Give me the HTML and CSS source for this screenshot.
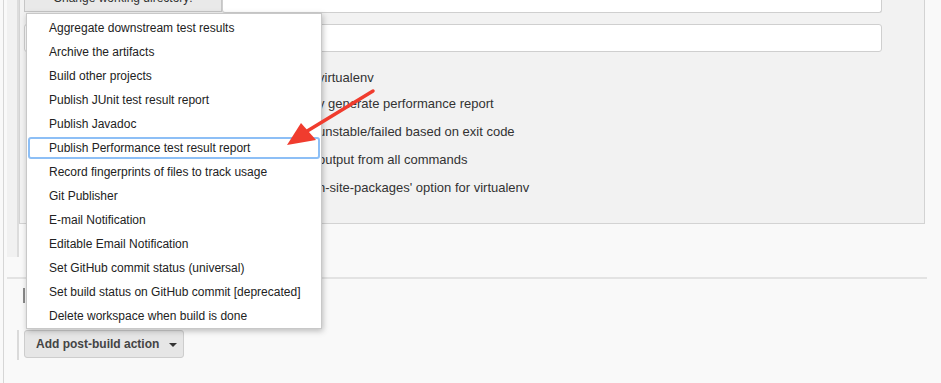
FILE: index.html
```html
<!DOCTYPE html>
<html>
<head>
<meta charset="utf-8">
<link rel="stylesheet" href="styles.css">
</head>
<body>
<div class="page">
  <div class="step">
    <div class="strip"><div class="grip"></div></div>
    <div class="panel">
      <div class="row1">
        <div class="tab">Change working directory:</div>
        <div class="input first"></div>
      </div>
      <div class="input second"></div>
      <div class="opts">
        <div class="opt o1"><span class="pre">Use </span><span>virtualenv</span></div>
        <div class="opt"><span class="pre">Automaticall</span><span>y generate performance report</span></div>
        <div class="opt"><span class="pre">Mark build </span><span>unstable/failed based on exit code</span></div>
        <div class="opt"><span class="pre">Display </span><span>output from all commands</span></div>
        <div class="opt"><span class="pre">Use '--no</span><span>n-site-packages' option for virtualenv</span></div>
      </div>
    </div>
  </div>
  <div class="sep"></div>
  <div class="mark"></div>
  <div class="btnrow">
    <div class="bar"></div>
    <div class="btn">Add post-build action <span class="caret"></span></div>
  </div>

  <div class="menu">
    <div class="item">Aggregate downstream test results</div>
    <div class="item">Archive the artifacts</div>
    <div class="item">Build other projects</div>
    <div class="item">Publish JUnit test result report</div>
    <div class="item">Publish Javadoc</div>
    <div class="item focus">Publish Performance test result report</div>
    <div class="item">Record fingerprints of files to track usage</div>
    <div class="item">Git Publisher</div>
    <div class="item">E-mail Notification</div>
    <div class="item">Editable Email Notification</div>
    <div class="item">Set GitHub commit status (universal)</div>
    <div class="item">Set build status on GitHub commit [deprecated]</div>
    <div class="item">Delete workspace when build is done</div>
  </div>

  <svg class="arrow" width="120" height="80" viewBox="0 0 120 80">
    <line x1="113" y1="25" x2="44" y2="67" stroke="#f03c2e" stroke-width="3.5" stroke-linecap="round"/>
    <polygon points="27,79 41,57 56,74" fill="#f03c2e"/>
  </svg>
</div>
</body>
</html>
```

FILE: styles.css
```css
* { box-sizing: border-box; }
html, body { margin: 0; padding: 0; }
body {
  background: #f9f9f9;
  font-family: "Liberation Sans", Arial, Helvetica, sans-serif;
  font-size: 13px;
  color: #333;
}
.page {
  position: relative;
  width: 941px;
  height: 383px;
  overflow: hidden;
  margin-left: 3px;
  border-left: 1px solid #d6d6d6;
  padding-left: 3px;
}
.step {
  display: flex;
  margin-top: -16px;
  width: 918px;
}
.strip {
  width: 12px;
  height: 273px;
  background: #f1f1f1;
  display: flex;
  justify-content: flex-end;
}
.grip {
  width: 2px;
  height: 100%;
  background: #dcdcdc;
}
.panel {
  flex: 1;
  align-self: flex-start;
  background: #f2f2f2;
  border: 1px solid #d3d3d3;
  border-top: none;
  padding: 0 42px 21px 4px;
}
.row1 {
  display: flex;
  height: 29px;
}
.tab {
  width: 198px;
  height: 28px;
  background: #e9e9e9;
  border: 1px solid #c6c6c6;
  border-top: none;
  display: flex;
  align-items: center;
  justify-content: center;
  color: #333;
  font-size: 12px;
}
.input {
  background: #fff;
  border: 1px solid #cfcfcf;
  border-radius: 3px;
}
.input.first {
  flex: 1;
  height: 29px;
  border-top: none;
  border-radius: 0 0 3px 3px;
}
.input.second {
  margin-top: 11px;
  height: 28px;
}
.opts {
  margin-top: 14px;
}
.opt {
  height: 28px;
  line-height: 28px;
  white-space: nowrap;
  display: flex;
}
.opt.o1 { height: 24px; line-height: 24px; }
.pre {
  width: 294px;
  text-align: right;
  overflow: hidden;
  flex: none;
}
.sep {
  margin-top: 20px;
  width: 920px;
  height: 2px;
  background: #e3e3e3;
}
.mark {
  margin: 9px 0 0 16px;
  width: 2px;
  height: 15px;
  background: #8a8a8a;
}
.btnrow {
  display: flex;
  margin-top: 27px;
  gap: 5px;
  margin-left: 10px;
}
.bar {
  width: 2px;
  height: 30px;
  background: #dadada;
}
.btn {
  height: 28px;
  width: 160px;
  background: #e6e6e6;
  border: 1px solid #cdcdcd;
  border-radius: 3px;
  font-weight: bold;
  font-size: 12px;
  color: #444;
  display: flex;
  align-items: center;
  padding-left: 11px;
  gap: 10px;
  white-space: nowrap;
}
.caret {
  width: 0;
  height: 0;
  border-left: 4px solid transparent;
  border-right: 4px solid transparent;
  border-top: 4px solid #333;
  margin-top: 1px;
}
.menu {
  position: absolute;
  left: 22px;
  top: 13px;
  width: 296px;
  height: 316px;
  background: #fff;
  border: 1px solid #c8c8c8;
  box-shadow: 1px 2px 6px rgba(0,0,0,0.25);
  padding: 2px 1px;
  font-size: 12px;
}
.item {
  height: 24px;
  line-height: 24px;
  padding-left: 21px;
  white-space: nowrap;
  color: #222;
}
.item.focus {
  outline: 2px solid #8dbff6;
  outline-offset: -2px;
  border-radius: 3px;
  height: 22px;
  line-height: 22px;
  margin: 1px 0;
}
.arrow {
  position: absolute;
  left: 256px;
  top: 66px;
}
```
